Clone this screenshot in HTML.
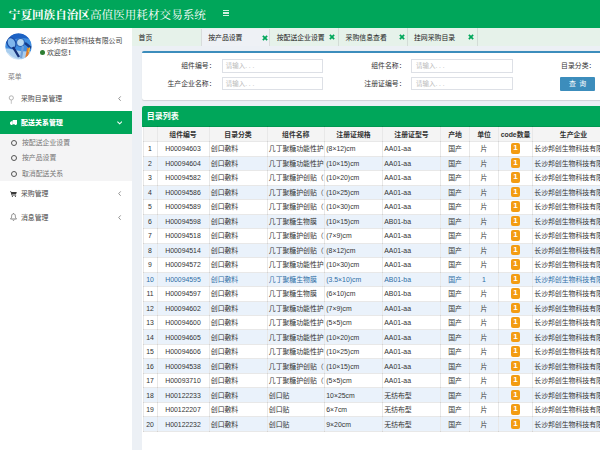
<!DOCTYPE html>
<html lang="zh-CN">
<head>
<meta charset="utf-8">
<title>宁夏回族自治区高值医用耗材交易系统</title>
<style>
*{box-sizing:border-box;margin:0;padding:0}
html,body{width:600px;height:450px;overflow:hidden;background:#ecf0f5;}
body{font-family:"Liberation Sans","Noto Sans CJK SC",sans-serif;font-size:6.86px;color:#333;position:relative}
.abs{position:absolute}
#hdr{left:0;top:0;width:600px;height:28px;background:#00a65a;}
#title{left:8.8px;top:1.5px;height:28px;line-height:27px;color:#fff;font-family:"Liberation Serif","Noto Serif CJK SC",serif;font-size:11.6px;white-space:nowrap;letter-spacing:0}
#title b{font-weight:700}
#title span{font-weight:400}
#burger{left:223px;top:10.2px;width:6px;height:6px;}
#burger i{display:block;height:1.3px;background:rgba(255,255,255,.82);margin-bottom:0.95px}
#side{left:0;top:28px;width:132px;height:422px;background:#fff;}
#avatar{left:4.7px;top:33px;width:27px;height:27px;border-radius:50%;overflow:hidden}
.uname{left:40px;top:35.6px;font-size:6.86px;color:#444;white-space:nowrap;line-height:10px}
.uhello{left:47px;top:47.7px;font-size:6.86px;color:#444;white-space:nowrap;line-height:10px}
.udot{left:40px;top:50px;width:5px;height:5px;border-radius:50%;background:#2e7d32}
.mlabel{left:8px;top:71.5px;font-size:6.86px;color:#848484;line-height:10px}
.mi{left:0;width:132px;height:24.2px;line-height:24.2px;font-size:6.86px;color:#444;white-space:nowrap}
.mi .t{position:absolute;left:21px;top:0}
.mi .ar{position:absolute;left:118.5px;top:0;font-size:6.86px;color:#666}
.ic{position:absolute;display:block}
.mi.act{background:#00a65a;color:#fff;font-weight:900;letter-spacing:0.12px}
#sub{left:0;top:134.3px;width:132px;height:46.3px;background:#f4f4f5}
.si{left:0;width:132px;height:15.6px;line-height:15.6px;font-size:6.86px;color:#777;white-space:nowrap}
.si .o{position:absolute;left:10.6px;top:4.9px;width:6px;height:6px;border:1.1px solid #555;border-radius:50%}
.si .t{position:absolute;left:22px;top:0}
#tabs{left:132px;top:28px;width:468px;height:18px;background:#e6f2ea;}
.tab{top:28px;height:18px;line-height:19.2px;font-size:6.86px;color:#222;white-space:nowrap}
.tab.on{background:#eef1f5;border-left:0.6px solid #d8dcdc;border-right:0.6px solid #d8dcdc;top:28.6px;height:17.4px;line-height:18px}
.tab.sep{border-right:0.7px solid #d3dcd7}
.tab .x{position:absolute;top:6.4px;display:block}
#form{left:141.5px;top:51.3px;width:462px;height:49px;background:#fff;border-top:2px solid #3c8dbc;border-radius:2px;box-shadow:0 0.6px 0.8px rgba(0,0,0,.12)}
.lb{font-size:6.86px;color:#333;line-height:10px;white-space:nowrap;text-align:right;width:70px}
.in{height:13.4px;border:1px solid #dde0e6;background:#fff;font-size:6.5px;color:#bbb;line-height:11px;padding-left:3px;white-space:nowrap}
#btn{left:559.6px;top:76.9px;width:35.8px;height:13.9px;background:#3c8dbc;color:#fff;font-size:6.86px;line-height:13.6px;word-spacing:1.6px;text-align:center;border-radius:1px}
#list{left:141.5px;top:106px;width:462px;height:350px;background:#fff}
#lh{left:141.5px;top:105.7px;width:462px;height:21.3px;background:#00a65a;color:#fff;font-weight:bold;font-size:8px;line-height:21.6px;padding-left:5.2px;border-radius:2px 0 0 0}
table{position:absolute;left:142.5px;top:126.2px;border-collapse:collapse;table-layout:fixed;width:531.5px;font-size:6.86px}
td,th{height:14.49px;border:1px solid rgba(0,0,0,.09);white-space:nowrap;overflow:hidden;padding:0.9px 1.3px 0 1.3px;line-height:12px;text-align:left;color:#333}
th{height:14.8px;padding:2px 1px 0;background:#f4f4f4;text-align:center;font-weight:bold;color:#333}
td.c{text-align:center}
tr.alt td{background:#eaf2fb}
tr.sel td{color:#2e6da4}
.bd{display:inline-block;width:9.7px;height:10.6px;line-height:10.6px;background:#f39c12;color:#fff;font-weight:bold;font-size:8px;border-radius:2px;position:relative;top:-0.9px;text-align:center;vertical-align:middle}
</style>
</head>
<body>
<div id="hdr" class="abs"></div>
<div id="title" class="abs"><b>宁夏回族自治区</b><span>高值医用耗材交易系统</span></div>
<div id="burger" class="abs"><i></i><i></i><i></i></div>

<div id="side" class="abs"></div>
<div id="avatar" class="abs">
<svg width="27" height="27" viewBox="0 0 27 27">
<defs><filter id="bl" x="-20%" y="-20%" width="140%" height="140%"><feGaussianBlur stdDeviation="0.55"/></filter>
<clipPath id="cp"><circle cx="13.5" cy="13.5" r="13.2"/></clipPath></defs>
<g clip-path="url(#cp)"><g filter="url(#bl)">
<rect x="-2" y="-2" width="31" height="31" fill="#3f8ee0"/>
<path d="M-2 -2H29V8C20 3 10 4 -2 12Z" fill="#1b62c4"/>
<path d="M-2 16C6 14 12 20 29 18V29H-2Z" fill="#a9cdee"/>
<ellipse cx="6.5" cy="10" rx="4.2" ry="5.5" fill="#7fb6ec" stroke="#1d4fa8" stroke-width="1.3" transform="rotate(-25 6.5 10)"/>
<circle cx="15.5" cy="9.5" r="4" fill="#b9d9f2" stroke="#2a63b5" stroke-width="1.2"/>
<path d="M8 14L14 24" stroke="#12307a" stroke-width="2.4"/>
<path d="M18 13L16 25" stroke="#6f9fd8" stroke-width="2.2"/>
<path d="M20 10L26 15" stroke="#153a8a" stroke-width="2.4"/>
<path d="M23.5 15L21.5 25" stroke="#e07c2c" stroke-width="2.6"/>
<path d="M24.6 14.5L23.6 19" stroke="#f2c23a" stroke-width="1.2"/>
<path d="M2 20C6 25 12 27 16 27" stroke="#cfe4f6" stroke-width="2" fill="none"/>
</g></g></svg>
</div>
<div class="abs uname">长沙邦创生物科技有限公司</div>
<div class="abs udot"></div>
<div class="abs uhello">欢迎您<b style="margin-left:0.8px">!</b></div>
<div class="abs mlabel">菜单</div>

<div class="abs mi" style="top:86.8px">
<svg class="ic" style="left:8.4px;top:7.9px" width="7" height="10" viewBox="0 0 7 10"><circle cx="3.3" cy="2.9" r="2.1" fill="none" stroke="#a9a9a9" stroke-width="0.9"/><path d="M3.3 5V8.8" stroke="#b5b5b5" stroke-width="0.8"/></svg>
<span class="t">采购目录管理</span><svg class="ic" style="left:118.4px;top:9.6px" width="3.2" height="5.2" viewBox="0 0 32 52"><path d="M27 4L7 26L27 48" fill="none" stroke="#7a7a7a" stroke-width="8"/></svg></div>
<div class="abs mi act" style="top:110.7px;height:23.6px;line-height:24.2px">
<svg class="ic" style="left:9.6px;top:9.2px" width="7.4" height="5.6" viewBox="0 0 74 56"><path d="M27 0H74V42H27Z M25 12H11L0 25V42H25Z" fill="#fff"/><circle cx="16" cy="44" r="9" fill="#fff"/><circle cx="56" cy="44" r="9" fill="#fff"/></svg>
<span class="t">配送关系管理</span>
<svg class="ic" style="left:117px;top:10.6px" width="5.4" height="3.6" viewBox="0 0 54 36"><path d="M4 6L27 28L50 6" fill="none" stroke="#fff" stroke-width="11"/></svg>
</div>
<div id="sub" class="abs"></div>
<div class="abs si" style="top:134.7px"><span class="o"></span><span class="t">按配送企业设置</span></div>
<div class="abs si" style="top:150.3px"><span class="o"></span><span class="t">按产品设置</span></div>
<div class="abs si" style="top:165.9px"><span class="o"></span><span class="t">取消配送关系</span></div>
<div class="abs mi" style="top:181.5px">
<svg class="ic" style="left:9.8px;top:9px" width="7" height="6" viewBox="0 0 70 60"><path d="M0 2H10L14 10H68L60 34H20L22 40H62V46H16L6 8H0Z" fill="#3a3a3a"/><circle cx="24" cy="53" r="6" fill="#3a3a3a"/><circle cx="54" cy="53" r="6" fill="#3a3a3a"/></svg>
<span class="t">采购管理</span><svg class="ic" style="left:118.4px;top:9.6px" width="3.2" height="5.2" viewBox="0 0 32 52"><path d="M27 4L7 26L27 48" fill="none" stroke="#7a7a7a" stroke-width="8"/></svg></div>
<div class="abs mi" style="top:205.7px">
<svg class="ic" style="left:9.8px;top:7.6px" width="7" height="8" viewBox="0 0 70 80"><path d="M35 8C20 8 16 22 16 36C16 50 8 54 5 60H65C62 54 54 50 54 36C54 22 50 8 35 8Z" fill="none" stroke="#6a6a6a" stroke-width="8"/><path d="M27 68C28 76 42 76 43 68" fill="none" stroke="#6a6a6a" stroke-width="7"/><path d="M35 0V8" stroke="#6a6a6a" stroke-width="7"/></svg>
<span class="t">消息管理</span><svg class="ic" style="left:118.4px;top:9.6px" width="3.2" height="5.2" viewBox="0 0 32 52"><path d="M27 4L7 26L27 48" fill="none" stroke="#7a7a7a" stroke-width="8"/></svg></div>

<div id="tabs" class="abs"></div>
<div class="abs tab" style="left:138.6px">首页</div>
<div class="abs tab on" style="left:201px;width:69.4px;padding-left:6.2px">按产品设置<svg class="x" style="left:59.8px" width="6" height="6" viewBox="0 0 56 56"><path d="M8 8L48 48M48 8L8 48" stroke="#00a65a" stroke-width="16" fill="none"/></svg></div>
<div class="abs tab sep" style="left:276.7px;width:62.2px">按配送企业设置<svg class="x" style="left:52.5px" width="6" height="6" viewBox="0 0 56 56"><path d="M8 8L48 48M48 8L8 48" stroke="#00a65a" stroke-width="16" fill="none"/></svg></div>
<div class="abs tab sep" style="left:345.6px;width:62.6px">采购信息查看<svg class="x" style="left:53.6px" width="6" height="6" viewBox="0 0 56 56"><path d="M8 8L48 48M48 8L8 48" stroke="#00a65a" stroke-width="16" fill="none"/></svg></div>
<div class="abs tab sep" style="left:414px;width:64.2px">挂网采购目录<svg class="x" style="left:54.2px" width="6" height="6" viewBox="0 0 56 56"><path d="M8 8L48 48M48 8L8 48" stroke="#00a65a" stroke-width="16" fill="none"/></svg></div>

<div id="form" class="abs"></div>
<div class="abs lb" style="left:145.5px;top:60.7px">组件编号：</div>
<div class="abs in" style="left:221.7px;top:59.4px;width:101.5px">请输入. . .</div>
<div class="abs lb" style="left:145.5px;top:78.9px">生产企业名称：</div>
<div class="abs in" style="left:221.7px;top:77px;width:101.5px">请输入. . .</div>
<div class="abs lb" style="left:335.5px;top:60.7px">组件名称：</div>
<div class="abs in" style="left:411px;top:59.4px;width:102px;padding-left:4px">请输入. . .</div>
<div class="abs lb" style="left:335.5px;top:78.9px">注册证编号：</div>
<div class="abs in" style="left:411px;top:77px;width:102px;padding-left:4px">请输入. . .</div>
<div class="abs lb" style="left:525.4px;top:61.1px">目录分类：</div>
<div id="btn" class="abs">查 询</div>

<div id="list" class="abs"></div>
<div id="lh" class="abs">目录列表</div>
<table>
<colgroup><col style="width:14px"><col style="width:52px"><col style="width:58px"><col style="width:57.5px"><col style="width:58px"><col style="width:58px"><col style="width:29px"><col style="width:29px"><col style="width:34px"><col style="width:82px"><col style="width:60px"></colgroup>
<tr><th></th><th>组件编号</th><th>目录分类</th><th>组件名称</th><th>注册证规格</th><th>注册证型号</th><th>产地</th><th>单位</th><th>code数量</th><th>生产企业</th><th></th></tr>
<tr class=""><td class="c">1</td><td class="c">H00094603</td><td>创口敷料</td><td>几丁聚糖功能性护</td><td>(8×12)cm</td><td>AA01-aa</td><td class="c">国产</td><td class="c">片</td><td class="c"><span class="bd">1</span></td><td>长沙邦创生物科技有限公司</td><td></td></tr>
<tr class="alt"><td class="c">2</td><td class="c">H00094604</td><td>创口敷料</td><td>几丁聚糖功能性护</td><td>(10×15)cm</td><td>AA01-aa</td><td class="c">国产</td><td class="c">片</td><td class="c"><span class="bd">1</span></td><td>长沙邦创生物科技有限公司</td><td></td></tr>
<tr class=""><td class="c">3</td><td class="c">H00094582</td><td>创口敷料</td><td>几丁聚糖护创贴（</td><td>(10×20)cm</td><td>AA01-aa</td><td class="c">国产</td><td class="c">片</td><td class="c"><span class="bd">1</span></td><td>长沙邦创生物科技有限公司</td><td></td></tr>
<tr class="alt"><td class="c">4</td><td class="c">H00094586</td><td>创口敷料</td><td>几丁聚糖护创贴（</td><td>(10×25)cm</td><td>AA01-aa</td><td class="c">国产</td><td class="c">片</td><td class="c"><span class="bd">1</span></td><td>长沙邦创生物科技有限公司</td><td></td></tr>
<tr class=""><td class="c">5</td><td class="c">H00094589</td><td>创口敷料</td><td>几丁聚糖护创贴（</td><td>(10×30)cm</td><td>AA01-aa</td><td class="c">国产</td><td class="c">片</td><td class="c"><span class="bd">1</span></td><td>长沙邦创生物科技有限公司</td><td></td></tr>
<tr class="alt"><td class="c">6</td><td class="c">H00094598</td><td>创口敷料</td><td>几丁聚糖生物膜</td><td>(10×15)cm</td><td>AB01-ba</td><td class="c">国产</td><td class="c">片</td><td class="c"><span class="bd">1</span></td><td>长沙邦创生物科技有限公司</td><td></td></tr>
<tr class=""><td class="c">7</td><td class="c">H00094518</td><td>创口敷料</td><td>几丁聚糖护创贴（</td><td>(7×9)cm</td><td>AA01-aa</td><td class="c">国产</td><td class="c">片</td><td class="c"><span class="bd">1</span></td><td>长沙邦创生物科技有限公司</td><td></td></tr>
<tr class="alt"><td class="c">8</td><td class="c">H00094514</td><td>创口敷料</td><td>几丁聚糖护创贴（</td><td>(8×12)cm</td><td>AA01-aa</td><td class="c">国产</td><td class="c">片</td><td class="c"><span class="bd">1</span></td><td>长沙邦创生物科技有限公司</td><td></td></tr>
<tr class=""><td class="c">9</td><td class="c">H00094572</td><td>创口敷料</td><td>几丁聚糖功能性护</td><td>(10×30)cm</td><td>AA01-aa</td><td class="c">国产</td><td class="c">片</td><td class="c"><span class="bd">1</span></td><td>长沙邦创生物科技有限公司</td><td></td></tr>
<tr class="alt sel"><td class="c">10</td><td class="c">H00094595</td><td>创口敷料</td><td>几丁聚糖生物膜</td><td>(3.5×10)cm</td><td>AB01-ba</td><td class="c">国产</td><td class="c">1</td><td class="c"><span class="bd">1</span></td><td>长沙邦创生物科技有限公司</td><td></td></tr>
<tr class=""><td class="c">11</td><td class="c">H00094597</td><td>创口敷料</td><td>几丁聚糖生物膜</td><td>(6×10)cm</td><td>AB01-ba</td><td class="c">国产</td><td class="c">片</td><td class="c"><span class="bd">1</span></td><td>长沙邦创生物科技有限公司</td><td></td></tr>
<tr class="alt"><td class="c">12</td><td class="c">H00094602</td><td>创口敷料</td><td>几丁聚糖功能性护</td><td>(7×9)cm</td><td>AA01-aa</td><td class="c">国产</td><td class="c">片</td><td class="c"><span class="bd">1</span></td><td>长沙邦创生物科技有限公司</td><td></td></tr>
<tr class=""><td class="c">13</td><td class="c">H00094600</td><td>创口敷料</td><td>几丁聚糖功能性护</td><td>(5×5)cm</td><td>AA01-aa</td><td class="c">国产</td><td class="c">片</td><td class="c"><span class="bd">1</span></td><td>长沙邦创生物科技有限公司</td><td></td></tr>
<tr class="alt"><td class="c">14</td><td class="c">H00094605</td><td>创口敷料</td><td>几丁聚糖功能性护</td><td>(10×20)cm</td><td>AA01-aa</td><td class="c">国产</td><td class="c">片</td><td class="c"><span class="bd">1</span></td><td>长沙邦创生物科技有限公司</td><td></td></tr>
<tr class=""><td class="c">15</td><td class="c">H00094606</td><td>创口敷料</td><td>几丁聚糖功能性护</td><td>(10×25)cm</td><td>AA01-aa</td><td class="c">国产</td><td class="c">片</td><td class="c"><span class="bd">1</span></td><td>长沙邦创生物科技有限公司</td><td></td></tr>
<tr class="alt"><td class="c">16</td><td class="c">H00094538</td><td>创口敷料</td><td>几丁聚糖护创贴（</td><td>(10×15)cm</td><td>AA01-aa</td><td class="c">国产</td><td class="c">片</td><td class="c"><span class="bd">1</span></td><td>长沙邦创生物科技有限公司</td><td></td></tr>
<tr class=""><td class="c">17</td><td class="c">H00093710</td><td>创口敷料</td><td>几丁聚糖护创贴（</td><td>(5×5)cm</td><td>AA01-aa</td><td class="c">国产</td><td class="c">片</td><td class="c"><span class="bd">1</span></td><td>长沙邦创生物科技有限公司</td><td></td></tr>
<tr class="alt"><td class="c">18</td><td class="c">H00122233</td><td>创口敷料</td><td>创口贴</td><td>10×25cm</td><td>无纺布型</td><td class="c">国产</td><td class="c">片</td><td class="c"><span class="bd">1</span></td><td>长沙邦创生物科技有限公司</td><td></td></tr>
<tr class=""><td class="c">19</td><td class="c">H00122207</td><td>创口敷料</td><td>创口贴</td><td>6×7cm</td><td>无纺布型</td><td class="c">国产</td><td class="c">片</td><td class="c"><span class="bd">1</span></td><td>长沙邦创生物科技有限公司</td><td></td></tr>
<tr class="alt"><td class="c">20</td><td class="c">H00122232</td><td>创口敷料</td><td>创口贴</td><td>9×20cm</td><td>无纺布型</td><td class="c">国产</td><td class="c">片</td><td class="c"><span class="bd">1</span></td><td>长沙邦创生物科技有限公司</td><td></td></tr>
</table>
</body>
</html>
